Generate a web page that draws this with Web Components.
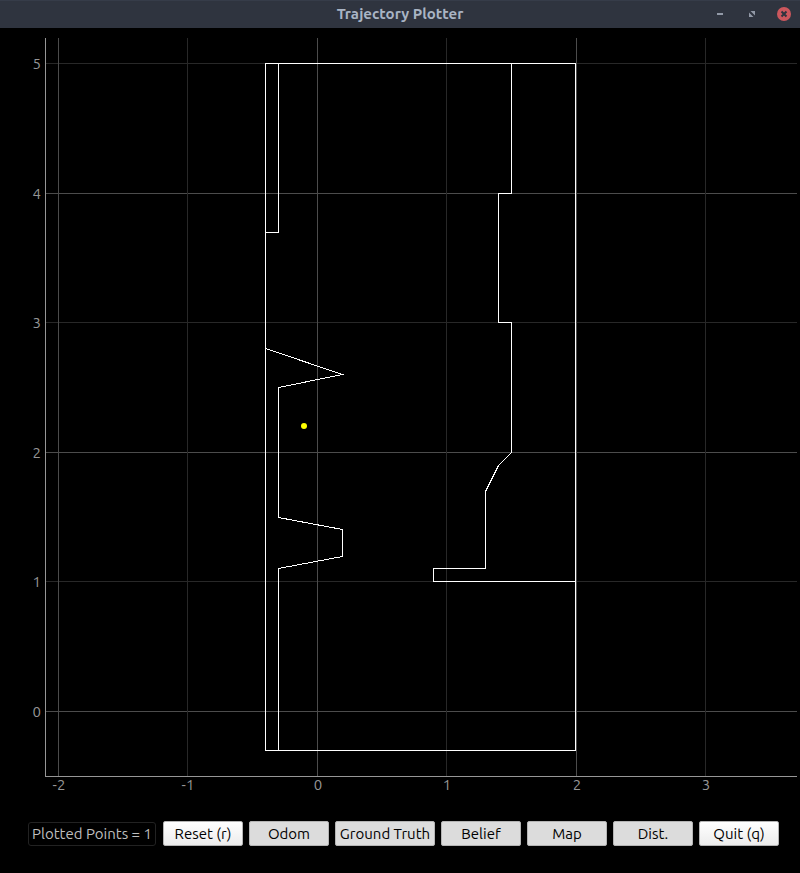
<!DOCTYPE html>
<html lang="en">
<head>
<meta charset="utf-8">
<title>Trajectory Plotter</title>
<style>
html { background: #000; }
body { margin: 0; background: #000; font-family: Ubuntu, "Noto Sans", "Open Sans", sans-serif; font-size: 15px; }
</style>
</head>
<body>
<plotter-window heading="Trajectory Plotter">
  <trajectory-plot></trajectory-plot>
  <plot-toolbar>
    <point-status>Plotted Points = 1</point-status>
    <tool-button>Reset (r)</tool-button>
    <tool-button toggled>Odom</tool-button>
    <tool-button toggled wide>Ground Truth</tool-button>
    <tool-button toggled>Belief</tool-button>
    <tool-button toggled>Map</tool-button>
    <tool-button toggled>Dist.</tool-button>
    <tool-button>Quit (q)</tool-button>
  </plot-toolbar>
</plotter-window>
<script>
class PlotterWindow extends HTMLElement {
  constructor() {
    super();
    this.attachShadow({ mode: "open" }).innerHTML = `
      <style>
        :host { display: flex; flex-direction: column; min-height: 100vh; background: #000; }
        header { display: grid; grid-template-columns: 1fr auto 1fr; align-items: center; height: 28px;
          background: #2f343f; box-shadow: inset 0 1px #363c49; }
        h1 { grid-column: 2; margin: 0; font-size: 15px; line-height: 28px; font-weight: 700; color: #a9b4c4; }
        nav { display: flex; justify-content: flex-end; gap: 16px; padding-right: 8px; }
        button { display: block; width: 16px; height: 16px; padding: 0; border: 0; background: none; }
        svg { display: block; }
      </style>
      <header>
        <h1></h1>
        <nav>
          <button aria-label="Minimize"><svg width="16" height="16"><path d="M5 7h6v2H5z" fill="#9299a7"/></svg></button>
          <button aria-label="Maximize"><svg width="16" height="16" fill="#9299a7"><path d="M6.500 5H11v4.500zM5 6.500L9.500 11H5z"/></svg></button>
          <button aria-label="Close"><svg width="16" height="16"><circle cx="8" cy="8" r="7" fill="#cc575d"/><path d="M5.500 5.500l5 5M10.500 5.500l-5 5" stroke="#2f343f" stroke-width="2"/></svg></button>
        </nav>
      </header>
      <slot></slot>`;
  }
  connectedCallback() {
    this.shadowRoot.querySelector("h1").textContent = this.getAttribute("heading");
  }
}

class TrajectoryPlot extends HTMLElement {
  constructor() {
    super();
    const xs = [[58, -2], [187, -1], [317, 0], [446, 1], [576, 2], [705, 3]];
    const ys = [[63, 5], [193, 4], [322, 3], [452, 2], [581, 1], [711, 0]];
    const shade = v => v % 2 ? "minor" : "major";
    const grid = [
      ...ys.map(([y, v]) => `<path class="${shade(v)}" d="M46 ${y + .5}H797"/>`),
      ...xs.map(([x, v]) => `<path class="${shade(v)}" d="M${x + .5} 38V776"/>`)
    ].join("");
    const labels = [
      ...xs.map(([x, v]) => `<text x="${x + 1}" y="790" text-anchor="middle">${v}</text>`),
      ...ys.map(([y, v]) => `<text x="41" y="${y + 6}" text-anchor="end">${v}</text>`)
    ].join("");
    this.attachShadow({ mode: "open" }).innerHTML = `
      <style>
        :host { display: block; }
        svg { display: block; width: 100%; height: auto; }
        path { fill: none; stroke-width: 1; shape-rendering: crispEdges; }
        .major { stroke: #4c4c4c; }
        .minor { stroke: #282828; }
        .axis { stroke: #969696; }
        .wall { stroke: #fff; }
        text { fill: #969696; font-size: 15px; }
      </style>
      <svg viewBox="0 28 800 772" role="img" aria-label="Map and trajectory">
        ${grid}
        <path class="axis" d="M45.500 38V776.500H797"/>
        <g transform="translate(.5 .5)">
          <path class="wall" d="M265 63H575V750H265Z"/>
          <path class="wall" d="M278 63V232H265M265 348L342 374L278 387V517L342 529V556L278 568V750"/>
          <path class="wall" d="M511 63V193H498V322H511V452L498 465L485 491V568H433V581H575"/>
        </g>
        <circle cx="304" cy="426" r="3" fill="#ff0"/>
        ${labels}
      </svg>`;
  }
}

class PlotToolbar extends HTMLElement {
  constructor() {
    super();
    this.attachShadow({ mode: "open" }).innerHTML = `
      <style>
        :host { display: flex; align-items: center; gap: 6px; padding: 21px 21px 27px 28px; }
      </style>
      <slot></slot>`;
  }
}

class PointStatus extends HTMLElement {
  constructor() {
    super();
    this.attachShadow({ mode: "open" }).innerHTML = `
      <style>
        :host { display: block; flex: 129 1 0; min-width: 0; }
        output { display: block; box-sizing: border-box; height: 24px; margin-right: 1px; border: 1px solid #222;
          border-radius: 3px; text-align: center; line-height: 22px; color: #bebebe; white-space: nowrap; }
      </style>
      <output><slot></slot></output>`;
  }
}

class ToolButton extends HTMLElement {
  constructor() {
    super();
    this.attachShadow({ mode: "open" }).innerHTML = `
      <style>
        :host { display: block; flex: 80 1 0; min-width: 0; }
        :host([wide]) { flex-grow: 100; }
        button { display: block; width: 100%; height: 25px; box-sizing: border-box; padding: 0;
          border: 1px solid #b4b4b4; border-radius: 2px; background: linear-gradient(#fff, #ececec);
          font: inherit; line-height: 23px; color: #000; white-space: nowrap; }
        :host([toggled]) button { background: #dcdcdc; }
      </style>
      <button><slot></slot></button>`;
  }
  connectedCallback() {
    if (this.hasAttribute("toggled")) this.shadowRoot.querySelector("button").setAttribute("aria-pressed", "true");
  }
}

customElements.define("plotter-window", PlotterWindow);
customElements.define("trajectory-plot", TrajectoryPlot);
customElements.define("plot-toolbar", PlotToolbar);
customElements.define("point-status", PointStatus);
customElements.define("tool-button", ToolButton);
</script>
</body>
</html>
